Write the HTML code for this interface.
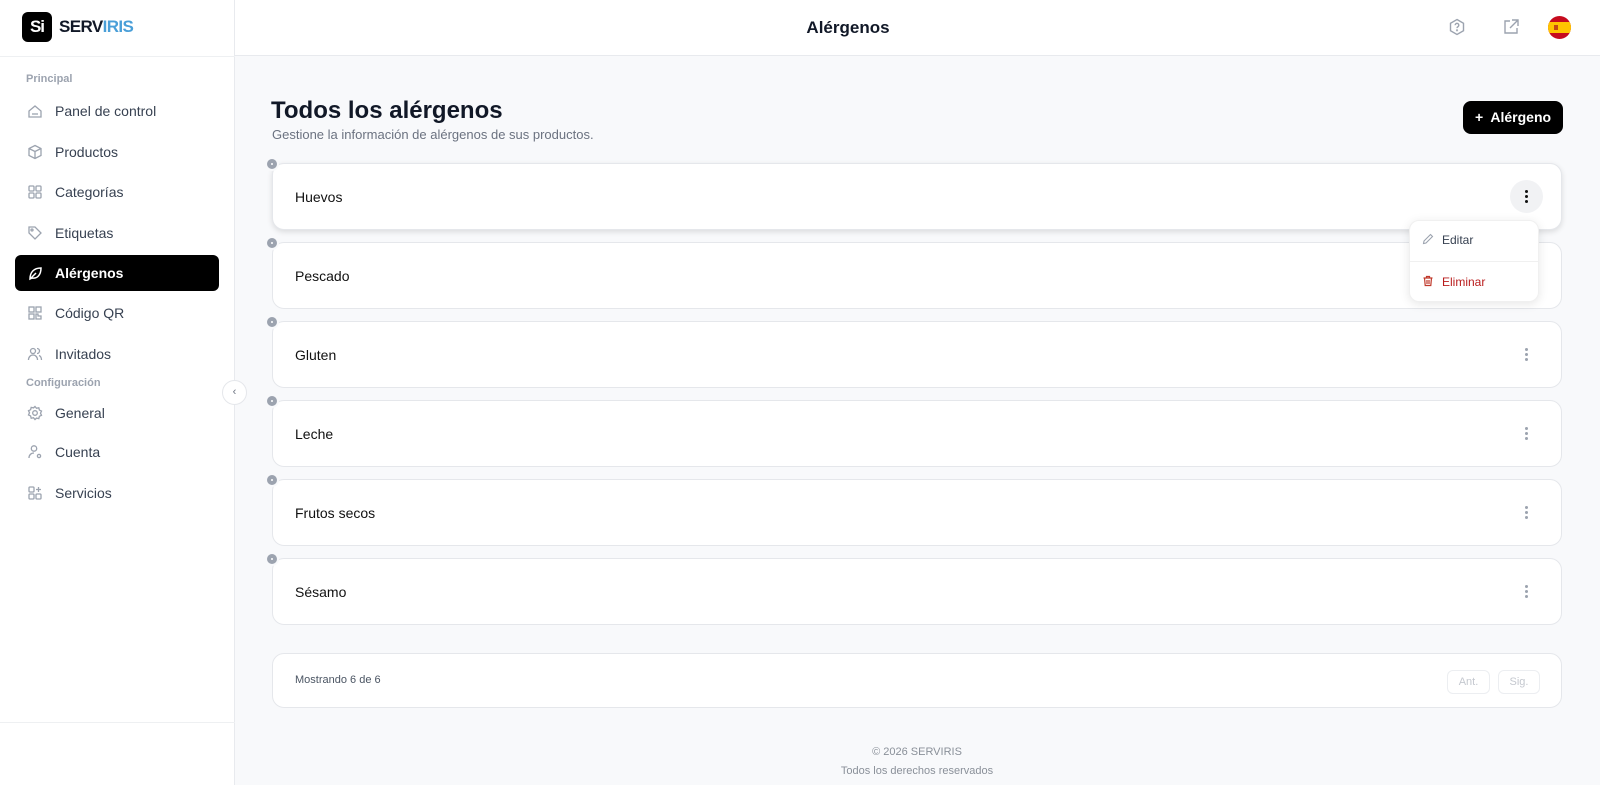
<!DOCTYPE html>
<html><head><meta charset="utf-8"><style>
*{box-sizing:border-box;margin:0;padding:0}
body{width:1600px;height:785px;overflow:hidden;font-family:"Liberation Sans",sans-serif;background:#f8f9fb;position:relative;color:#111827}
.side{position:absolute;left:0;top:0;width:235px;height:785px;background:#fff;border-right:1px solid #e8eaee}
.logo{position:absolute;left:22px;top:12px;width:30px;height:30px;background:#000;border-radius:6px;color:#fff;font-weight:700;font-size:17px;text-align:center;line-height:30px;letter-spacing:-1px}
.brand{position:absolute;left:59px;top:17px;font-size:17px;font-weight:700;letter-spacing:-0.6px}
.brand span{color:#4a9fd8}
.hline{position:absolute;left:0;top:56px;width:235px;border-top:1px solid #eef0f2}
.lbl{position:absolute;left:26px;font-size:11px;font-weight:700;color:#9ca3af}
.item{position:absolute;left:15px;width:204px;height:36px;font-size:14px;color:#374151;font-weight:500}
.item svg{position:absolute;left:12px;top:10px}
.item span{position:absolute;left:40px;top:10px}
.item.act{background:#000;color:#fff;border-radius:6px;font-weight:700}
.bot{position:absolute;left:0;top:722px;width:235px;border-top:1px solid #eef0f2}
.coll{position:absolute;left:222px;top:380px;width:25px;height:25px;border-radius:50%;background:#fff;border:1px solid #e5e7eb;font-size:11px;color:#6b7280;text-align:center;line-height:23px}
.head{position:absolute;left:235px;top:0;width:1365px;height:56px;background:#fff;border-bottom:1px solid #e8eaee}
.title{position:absolute;left:848px;top:18px;transform:translateX(-50%);font-size:17px;font-weight:700}
h1{position:absolute;left:271px;top:97px;font-size:24px;font-weight:700}
.sub{position:absolute;left:272px;top:127px;font-size:13px;color:#6b7280}
.btn{position:absolute;left:1463px;top:101px;width:100px;height:33px;background:#000;border-radius:8px;color:#fff;font-size:14px;font-weight:700;line-height:33px;text-align:center}
.card{position:absolute;left:272px;width:1290px;height:67px;background:#fff;border:1px solid #e5e7eb;border-radius:12px}
.card span{position:absolute;left:22px;top:25px;font-size:14px;font-weight:500;color:#111}
.card .k{position:absolute;left:1237px;top:16px;width:33px;height:33px;border-radius:50%}
.k i{position:absolute;left:15px;width:3px;height:3px;border-radius:50%;background:#9ca3af}
.dot{position:absolute;left:265px;width:14px;height:14px;border-radius:50%;background:#9ca3af;border:2px solid #f8f9fb}
.dot:after{content:"";position:absolute;left:4px;top:4px;width:2px;height:2px;background:#fff;border-radius:50%}
.menu{position:absolute;left:1409px;top:220px;width:130px;height:82px;background:#fff;border-radius:10px;box-shadow:0 2px 10px rgba(0,0,0,.1);border:1px solid #f0f0f0}
.menu div{position:absolute;left:32px;font-size:12px;font-weight:500}
.foot{position:absolute;left:272px;top:653px;width:1290px;height:55px;background:#fff;border:1px solid #e5e7eb;border-radius:12px}
.pg{position:absolute;top:16px;height:24px;border:1px solid #eceef1;border-radius:6px;font-size:11px;color:#c4c8cf;text-align:center;line-height:22px}
.copy{position:absolute;left:917px;transform:translateX(-50%);font-size:11px;color:#8a9099;white-space:nowrap}
</style></head><body>
<div class="side">
<div class="logo">Si</div><div class="brand">SERV<span>IRIS</span></div>
<div class="hline"></div>
<div class="lbl" style="top:73px">Principal</div>
<div class="item" style="top:93px"><svg width="16" height="16" viewBox="0 0 16 16" fill="none" stroke="#9ca3af" stroke-width="1.3"><path d="M2 8l6-5 6 5v6H2z"/><path d="M5 11h6"/></svg><span>Panel de control</span></div>
<div class="item" style="top:134px"><svg width="16" height="16" viewBox="0 0 16 16" fill="none" stroke="#9ca3af" stroke-width="1.3"><path d="M8 1.5l6 3v7l-6 3-6-3v-7z M2 4.5l6 3 6-3 M8 7.5v7"/></svg><span>Productos</span></div>
<div class="item" style="top:174px"><svg width="16" height="16" viewBox="0 0 16 16" fill="none" stroke="#9ca3af" stroke-width="1.3"><rect x="2" y="2" width="5" height="5" rx="1"/><rect x="9" y="2" width="5" height="5" rx="1"/><rect x="2" y="9" width="5" height="5" rx="1"/><rect x="9" y="9" width="5" height="5" rx="1"/></svg><span>Categorías</span></div>
<div class="item" style="top:215px"><svg width="16" height="16" viewBox="0 0 16 16" fill="none" stroke="#9ca3af" stroke-width="1.3"><path d="M2 2h6l6 6-6 6-6-6z"/><circle cx="5" cy="5" r="1"/></svg><span>Etiquetas</span></div>
<div class="item act" style="top:255px"><svg width="16" height="16" viewBox="0 0 16 16" fill="none" stroke="#fff" stroke-width="1.5"><path d="M3 14c0-7 4-11 11-11 0 7-4 11-9 10z M3 14l6-6"/></svg><span>Alérgenos</span></div>
<div class="item" style="top:295px"><svg width="16" height="16" viewBox="0 0 16 16" fill="none" stroke="#9ca3af" stroke-width="1.3"><rect x="2" y="2" width="5" height="5"/><rect x="9" y="2" width="5" height="5"/><rect x="2" y="9" width="5" height="5"/><path d="M9 9h2v2h3v3h-5z"/></svg><span>Código QR</span></div>
<div class="item" style="top:336px"><svg width="16" height="16" viewBox="0 0 16 16" fill="none" stroke="#9ca3af" stroke-width="1.3"><circle cx="6" cy="5" r="2.5"/><path d="M1.5 14c0-3 2-5 4.5-5s4.5 2 4.5 5 M10 2.5a2.5 2.5 0 010 5 M12 9.5c1.5.6 2.5 2.3 2.5 4.5"/></svg><span>Invitados</span></div>
<div class="lbl" style="top:377px">Configuración</div>
<div class="item" style="top:395px"><svg width="16" height="16" viewBox="0 0 16 16" fill="none" stroke="#9ca3af" stroke-width="1.3"><circle cx="8" cy="8" r="2.3"/><path d="M8 1.5l1.5 1.8 2.3-.5.6 2.3 2.1 1-1 2.1 1 2.1-2.1 1-.6 2.3-2.3-.5L8 14.5l-1.5-1.8-2.3.5-.6-2.3-2.1-1 1-2.1-1-2.1 2.1-1 .6-2.3 2.3.5z"/></svg><span>General</span></div>
<div class="item" style="top:434px"><svg width="16" height="16" viewBox="0 0 16 16" fill="none" stroke="#9ca3af" stroke-width="1.3"><circle cx="7" cy="4.5" r="2.7"/><path d="M2 14c0-3 2-5 5-5"/><circle cx="12" cy="12" r="1.6"/></svg><span>Cuenta</span></div>
<div class="item" style="top:475px"><svg width="16" height="16" viewBox="0 0 16 16" fill="none" stroke="#9ca3af" stroke-width="1.3"><rect x="2" y="2" width="5" height="5" rx="1"/><rect x="2" y="9" width="5" height="5" rx="1"/><rect x="9" y="9" width="5" height="5" rx="1"/><path d="M11.5 2v5 M9 4.5h5"/></svg><span>Servicios</span></div>
<div class="bot"></div>
</div>
<div class="coll">‹</div>
<div class="head"></div>
<div class="title">Alérgenos</div>
<svg style="position:absolute;left:1448px;top:18px" width="18" height="18" viewBox="0 0 18 18" fill="none" stroke="#9ca3af" stroke-width="1.4"><path d="M9 1.5l6.5 3.75v7.5L9 16.5l-6.5-3.75v-7.5z"/><path d="M7.2 7.2a1.8 1.8 0 113 1.3c-.7.4-1.2.8-1.2 1.6" /><circle cx="9" cy="12.3" r=".4"/></svg>
<svg style="position:absolute;left:1502px;top:18px" width="18" height="18" viewBox="0 0 18 18" fill="none" stroke="#9ca3af" stroke-width="1.4"><path d="M8 3H3v12h12v-5 M10 2h6v6 M16 2L8 10"/></svg>
<svg style="position:absolute;left:1548px;top:16px" width="23" height="23" viewBox="0 0 23 23"><defs><clipPath id="c"><circle cx="11.5" cy="11.5" r="11.5"/></clipPath></defs><g clip-path="url(#c)"><rect width="23" height="23" fill="#c60b1e"/><rect y="6" width="23" height="11" fill="#ffc400"/><rect x="6" y="9" width="4" height="5" fill="#ad1519" opacity=".7"/></g></svg>
<h1>Todos los alérgenos</h1>
<div class="sub">Gestione la información de alérgenos de sus productos.</div>
<div class="btn">+&nbsp; Alérgeno</div>

<div class="card" style="top:163px;box-shadow:0 2px 6px rgba(0,0,0,.12)"><span>Huevos</span><div class="k" style="background:#f1f2f4"><i style="top:10px;background:#111"></i><i style="top:15px;background:#111"></i><i style="top:20px;background:#111"></i></div></div>
<div class="card" style="top:242px"><span>Pescado</span></div>
<div class="card" style="top:321px"><span>Gluten</span><div class="k"><i style="top:10px"></i><i style="top:15px"></i><i style="top:20px"></i></div></div>
<div class="card" style="top:400px"><span>Leche</span><div class="k"><i style="top:10px"></i><i style="top:15px"></i><i style="top:20px"></i></div></div>
<div class="card" style="top:479px"><span>Frutos secos</span><div class="k"><i style="top:10px"></i><i style="top:15px"></i><i style="top:20px"></i></div></div>
<div class="card" style="top:558px"><span>Sésamo</span><div class="k"><i style="top:10px"></i><i style="top:15px"></i><i style="top:20px"></i></div></div>
<div class="dot" style="top:157px"></div><div class="dot" style="top:236px"></div><div class="dot" style="top:315px"></div><div class="dot" style="top:394px"></div><div class="dot" style="top:473px"></div><div class="dot" style="top:552px"></div>

<div class="menu">
<svg style="position:absolute;left:12px;top:12px" width="12" height="12" viewBox="0 0 12 12" fill="none" stroke="#9ca3af" stroke-width="1.1"><path d="M8.5 1.5l2 2-6.5 6.5-2.5.5.5-2.5z"/></svg>
<div style="top:12px;color:#374151">Editar</div>
<div style="position:absolute;left:0;top:40px;width:128px;border-top:1px solid #f0f0f0"></div>
<svg style="position:absolute;left:12px;top:54px" width="12" height="12" viewBox="0 0 12 12" fill="none" stroke="#c0392b" stroke-width="1.2"><path d="M1.5 3h9 M4.5 3V1.5h3V3 M2.5 3l.7 7.5h5.6L9.5 3 M5 5v4 M7 5v4"/></svg>
<div style="top:54px;color:#b91c1c">Eliminar</div>
</div>

<div class="foot"><div style="position:absolute;left:22px;top:20px;font-size:11px;color:#4b5563">Mostrando 6 de 6</div>
<div class="pg" style="left:1174px;width:43px">Ant.</div><div class="pg" style="left:1225px;width:42px">Sig.</div></div>
<div class="copy" style="top:746px">© 2026 SERVIRIS</div>
<div class="copy" style="top:765px">Todos los derechos reservados</div>
</body></html>
